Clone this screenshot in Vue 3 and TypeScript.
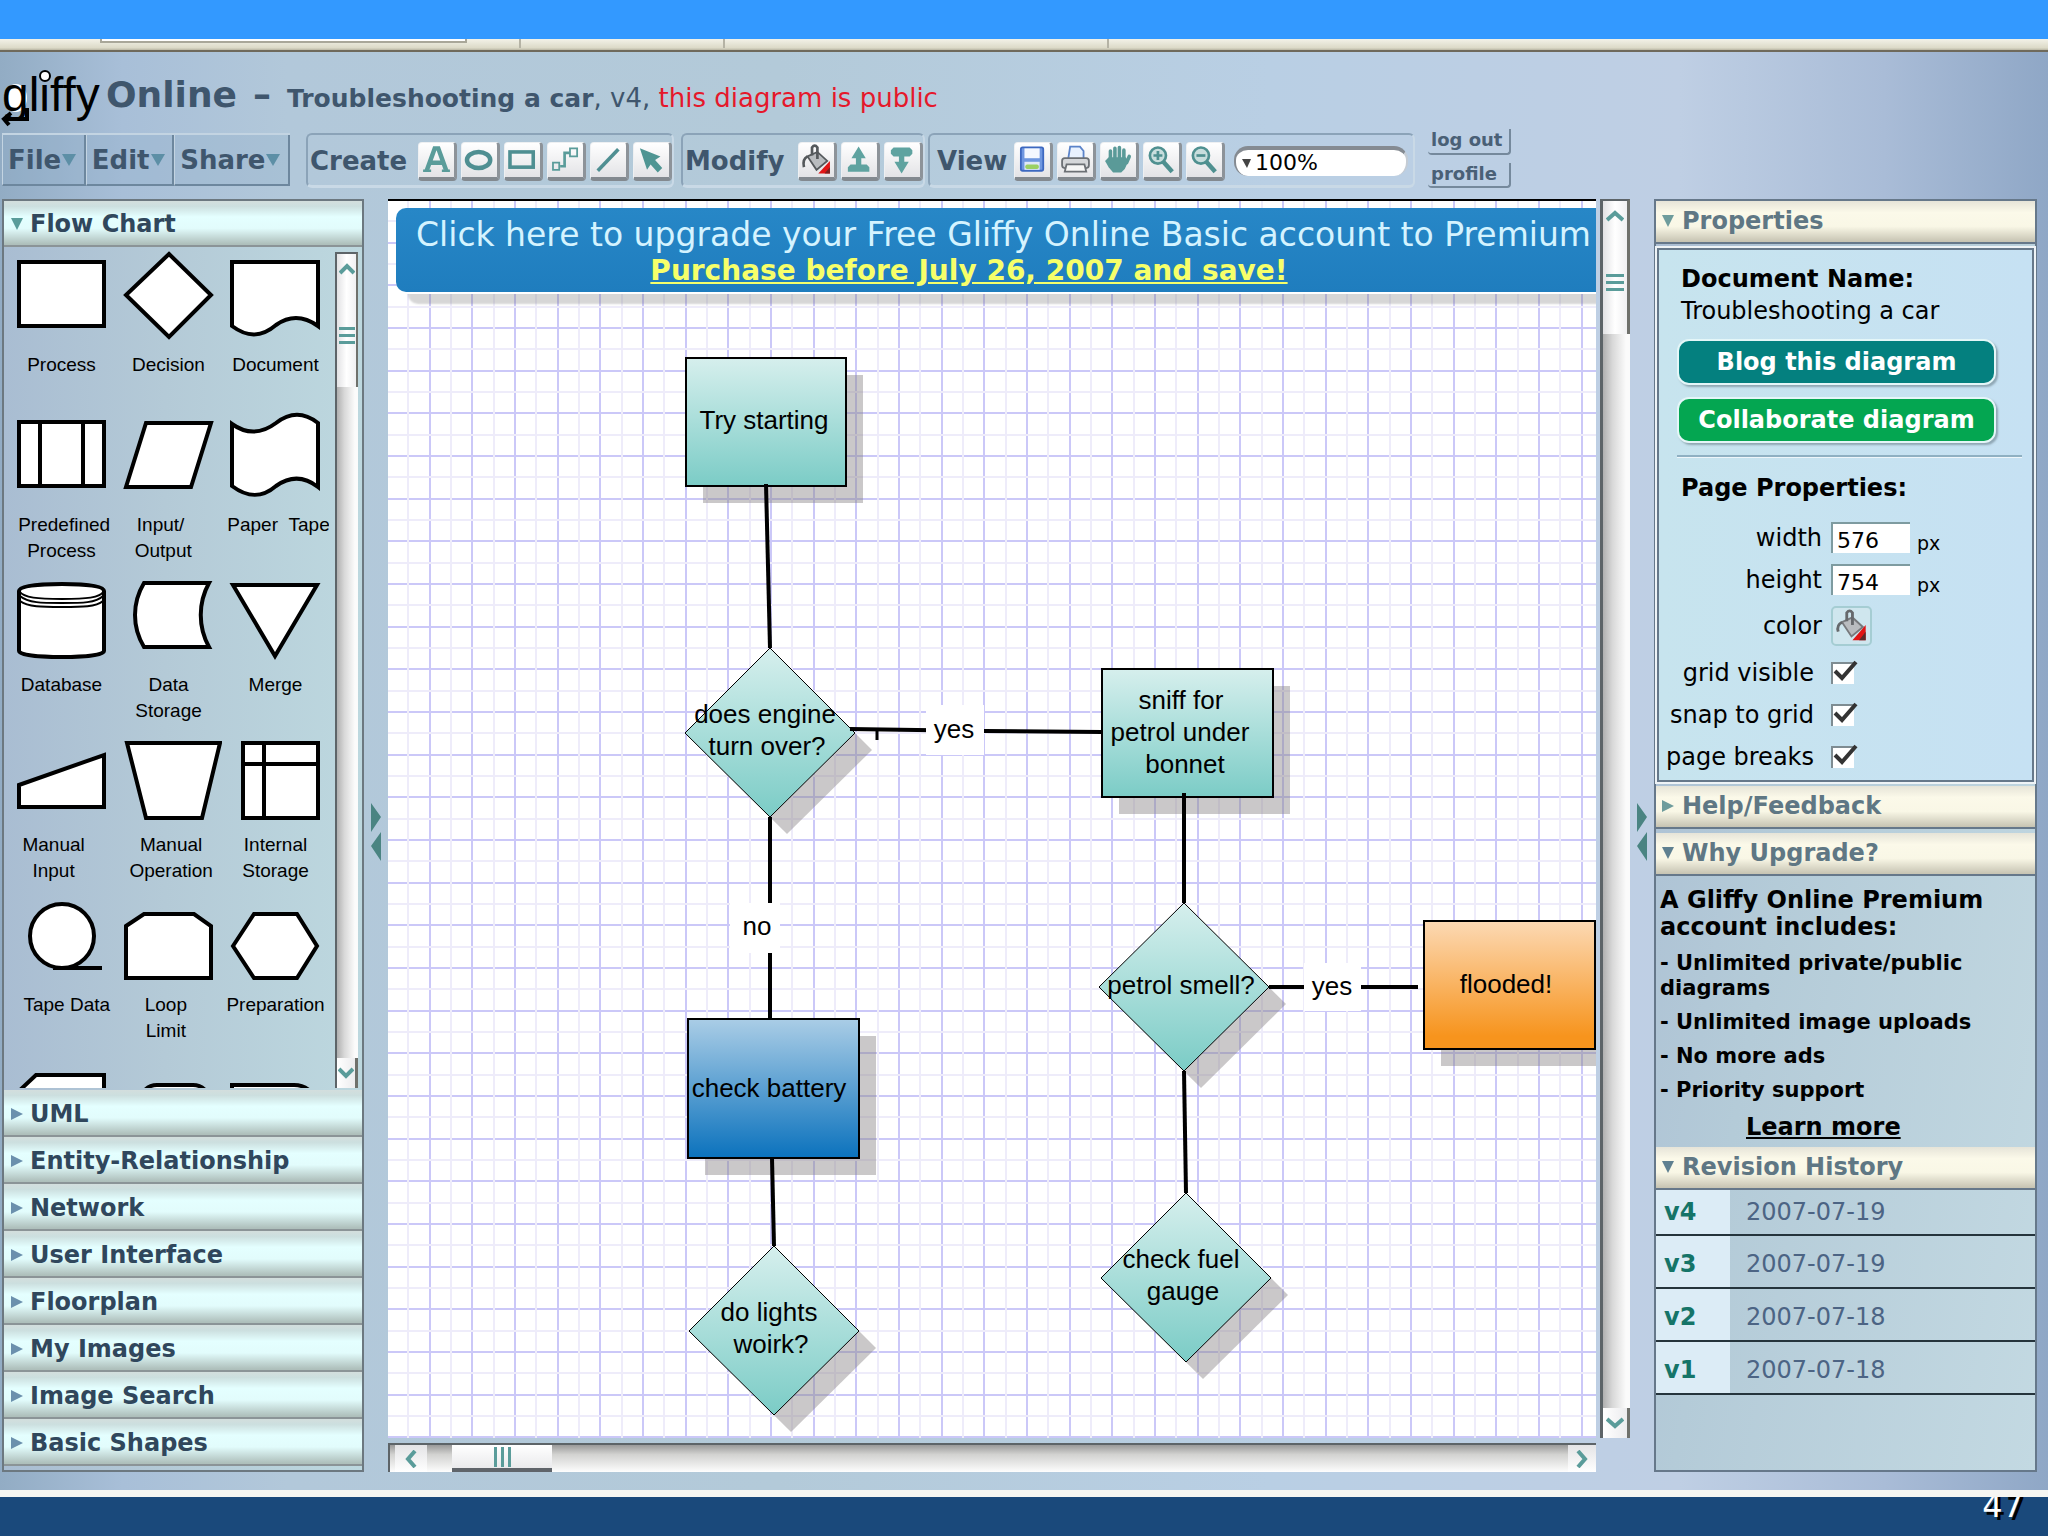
<script setup lang="ts">
import { ref } from 'vue'

interface Stencil {
  label?: string
  d: string
  thin?: string
}

interface DiagramNode {
  kind: 'rect' | 'diamond'
  x: number
  y: number
  w: number
  h: number
  fill: string
  lines: { text: string; x: number; y: number }[]
}

const stencils: Stencil[] = [
  { label: 'Process', d: 'M11 15H96V79H11Z' },
  { label: 'Decision', d: 'M54 7L96 48L54 90L11 48Z' },
  { label: 'Document', d: 'M10 15H96V79C82 69 68 68 54 78C40 90 26 91 10 79Z' },
  { label: '\u00a0Predefined\nProcess', d: 'M11 15H96V79H11ZM32 15V79M75 15V79' },
  { label: 'Input/\u00a0\u00a0\u00a0\nOutput\u00a0\u00a0', d: 'M31 16H96L76 80H11Z' },
  { label: '\u00a0Paper\u00a0\u00a0Tape', d: 'M10 17C24 27 38 28 54 16C68 5 82 5 96 16V80C82 69 68 69 54 79C40 91 26 91 10 79Z' },
  { label: 'Database', d: 'M11 24C11 19 30 17 54 17S96 19 96 24V84C96 88 78 90 54 90S11 88 11 84Z', thin: 'M11 24C16 31 30 32 54 32S92 31 96 24M12 29C20 36 34 36 54 36S88 36 95 29M12 34C20 40 34 40 54 40S88 40 95 34' },
  { label: 'Data\nStorage', d: 'M29 16H94C83 36 83 60 94 80H29C17 60 17 36 29 16Z' },
  { label: 'Merge', d: 'M11 18H95L53 89Z' },
  { label: 'Manual\u00a0\u00a0\u00a0\nInput\u00a0\u00a0\u00a0', d: 'M11 58L96 28V80H11Z' },
  { label: '\u00a0Manual\n\u00a0Operation', d: 'M12 16H105L87 91H31Z' },
  { label: 'Internal\nStorage', d: 'M21 16H96V91H21ZM42 16V91M21 37H96' },
  { label: '\u00a0\u00a0Tape\u00a0Data', d: 'M86 49A32 32 0 1 0 22 49A32 32 0 1 0 86 49M45 81H94' },
  { label: 'Loop\u00a0\nLimit\u00a0', d: 'M11 39L29 27H79L96 39V91H11Z' },
  { label: 'Preparation', d: 'M11 59L32 27H75L95 59L75 91H32Z' },
  { d: 'M11 44L28 28H96V80H11Z' },
  { d: 'M24 60C24 46 32 38 42 38H78C88 38 96 46 96 60Z' },
  { d: 'M10 38H72C84 38 94 46 96 60H10Z' },
]

const libraries = ['UML', 'Entity-Relationship', 'Network', 'User Interface', 'Floorplan', 'My Images', 'Image Search', 'Basic Shapes']

const revisions = [
  { version: 'v4', date: '2007-07-19' },
  { version: 'v3', date: '2007-07-19' },
  { version: 'v2', date: '2007-07-18' },
  { version: 'v1', date: '2007-07-18' },
]

const nodes: DiagramNode[] = [
  { kind: 'rect', x: 298, y: 157, w: 160, h: 128, fill: 'url(#teal)', lines: [{ text: 'Try starting', x: 376, y: 228 }] },
  { kind: 'diamond', x: 297, y: 447, w: 170, h: 169, fill: 'url(#teal)', lines: [{ text: 'does engine', x: 377, y: 522 }, { text: 'turn over?', x: 379, y: 554 }] },
  { kind: 'rect', x: 714, y: 468, w: 171, h: 128, fill: 'url(#teal)', lines: [{ text: 'sniff for', x: 793, y: 508 }, { text: 'petrol under', x: 792, y: 540 }, { text: 'bonnet', x: 797, y: 572 }] },
  { kind: 'diamond', x: 711, y: 702, w: 170, h: 168, fill: 'url(#teal)', lines: [{ text: 'petrol smell?', x: 793, y: 793 }] },
  { kind: 'rect', x: 1036, y: 720, w: 171, h: 128, fill: 'url(#orange)', lines: [{ text: 'flooded!', x: 1118, y: 792 }] },
  { kind: 'rect', x: 300, y: 818, w: 171, h: 139, fill: 'url(#blue)', lines: [{ text: 'check battery', x: 381, y: 896 }] },
  { kind: 'diamond', x: 301, y: 1045, w: 170, h: 169, fill: 'url(#teal)', lines: [{ text: 'do lights', x: 381, y: 1120 }, { text: 'woirk?', x: 383, y: 1152 }] },
  { kind: 'diamond', x: 713, y: 992, w: 170, h: 169, fill: 'url(#teal)', lines: [{ text: 'check fuel', x: 793, y: 1067 }, { text: 'gauge', x: 795, y: 1099 }] },
]

const connectors = [
  'M378 283L382 447', 'M462 528L596 530L714 531', 'M382 616V818',
  'M796 592V702', 'M881 786H1030', 'M796 870L798 992', 'M384 957L386 1045',
]

const edgeLabels = [
  { text: 'yes', x: 538, y: 504, w: 58, h: 50, tx: 566, ty: 537 },
  { text: 'no', x: 342, y: 702, w: 50, h: 50, tx: 369, ty: 734 },
  { text: 'yes', x: 916, y: 762, w: 57, h: 48, tx: 944, ty: 794 },
]

const pitch = 128 / 3
const cells = Array.from({ length: 70 }, (_, i) => i)
const line = (start: number, i: number, half = 0) => Math.round(start + (i + half) * pitch)

function outline(n: DiagramNode): string {
  const cx = n.x + n.w / 2
  const cy = Math.round(n.y + n.h / 2)
  return n.kind === 'rect'
    ? `M${n.x} ${n.y}h${n.w}v${n.h}h${-n.w}Z`
    : `M${cx} ${n.y}L${n.x + n.w} ${cy}L${cx} ${n.y + n.h}L${n.x} ${cy}Z`
}

const pageWidth = ref('576')
const pageHeight = ref('754')
const zoom = ref('100%')
const options = ref([
  { id: 'grid', label: 'grid visible', on: true },
  { id: 'snap', label: 'snap to grid', on: true },
  { id: 'breaks', label: 'page breaks', on: true },
])
</script>

<template>
  <div class="page">
    <div class="slide-top"></div>
    <div class="browser-edge">
      <span class="edge-box"></span>
      <span class="edge-a"></span>
      <span class="edge-b"></span>
      <span class="edge-c"></span>
    </div>

    <div class="app">
      <header>
        <div class="title-row">
          <svg class="logo" width="102" height="62" viewBox="0 0 102 62" role="img" aria-label="gliffy">
            <ellipse cx="16" cy="32" rx="11" ry="14" fill="#fff" />
            <text x="2" y="45" font-size="48">gliffy</text>
            <circle cx="45" cy="10" r="5" fill="#fff" stroke="#000" stroke-width="2" />
            <path d="M27 42V53H5M11 47L4 53L9 59" fill="none" stroke="#000" stroke-width="4" />
          </svg>
          <h1>
            <span>Online</span>
            <span>–</span>
            <span class="doc">Troubleshooting a car<span class="ver">, v4, </span><span class="public">this diagram is public</span></span>
          </h1>
        </div>

        <div class="toolbar">
          <nav class="menus">
            <button v-for="m in ['File', 'Edit', 'Share']" :key="m" type="button">
              {{ m }}<svg width="14" height="12" viewBox="0 0 14 12"><path d="M0 0H14L7 12Z" fill="#5d8fa6" /></svg>
            </button>
          </nav>

          <div class="group create">
            <span class="group-name">Create</span>
            <button class="tool" type="button" aria-label="Text">
              <svg viewBox="0 0 38 38"><path d="M8 31L17 6H21L30 31M12 22H26" fill="none" stroke="#5a9c9a" stroke-width="5" /><path d="M4 31H13M25 31H34" stroke="#5a9c9a" stroke-width="3" /></svg>
            </button>
            <button class="tool" type="button" aria-label="Ellipse">
              <svg viewBox="0 0 38 38"><ellipse cx="18" cy="19" rx="13" ry="9" fill="none" stroke="#4f8f92" stroke-width="5" /></svg>
            </button>
            <button class="tool" type="button" aria-label="Rectangle">
              <svg viewBox="0 0 38 38"><rect x="5" y="10" width="26" height="17" fill="none" stroke="#4f8f92" stroke-width="4" /></svg>
            </button>
            <button class="tool" type="button" aria-label="Connector">
              <svg viewBox="0 0 38 38" fill="none" stroke="#5a9c9a"><path d="M13 26H18V11H24" stroke-width="3" /><path d="M5 22H12V30H5ZM24 6H32V15H24Z" stroke-width="2" /></svg>
            </button>
            <button class="tool" type="button" aria-label="Line">
              <svg viewBox="0 0 38 38"><path d="M7 31L30 7" stroke="#4f8f92" stroke-width="4" /></svg>
            </button>
            <button class="tool" type="button" aria-label="Pointer">
              <svg viewBox="0 0 38 38"><path d="M6 6L29 15L23 19L31 28L26 33L18 24L14 30Z" fill="#4f9593" /></svg>
            </button>
          </div>

          <div class="group modify">
            <span class="group-name">Modify</span>
            <button class="tool" type="button" aria-label="Fill color">
              <svg viewBox="0 0 38 38"><path d="M9 15L20 10L31 20L19 30Z" fill="#b9bcbf" stroke="#55595c" stroke-width="2" /><path d="M14 14V5Q17 1 20 5V18M9 15Q3 18 5 27" fill="none" stroke="#55595c" stroke-width="3" /><path d="M34 20V34H21Z" fill="#e01515" /><path d="M34 27V34H28Z" fill="#7a2020" /></svg>
            </button>
            <button class="tool" type="button" aria-label="Bring to front">
              <svg viewBox="0 0 38 38" fill="#5fa3a0"><path d="M18 4L26 17H21V24H27L30 27V32H6V27L9 24H15V17H10Z" /></svg>
            </button>
            <button class="tool" type="button" aria-label="Send to back">
              <svg viewBox="0 0 38 38" fill="#5fa3a0"><path d="M9 5H27L30 8V12L27 15H21V21H26L18 34L10 21H15V15H9L6 12V8Z" /></svg>
            </button>
          </div>

          <div class="group view">
            <span class="group-name">View</span>
            <button class="tool" type="button" aria-label="Save">
              <svg viewBox="0 0 38 38"><rect x="6" y="5" width="25" height="26" rx="2" fill="#6f97e0" stroke="#3d68c0" stroke-width="2" /><rect x="10" y="6" width="17" height="11" fill="#f4f8ff" /><rect x="10" y="21" width="17" height="9" fill="#dfe9f8" /><rect x="11" y="24" width="15" height="5" rx="2" fill="#9ad064" /></svg>
            </button>
            <button class="tool" type="button" aria-label="Print">
              <svg viewBox="0 0 38 38"><path d="M11 17L13 4H24L28 9V17" fill="#e9f2ff" stroke="#5b83c9" stroke-width="2" /><rect x="4" y="17" width="30" height="11" rx="3" fill="#d5d7da" stroke="#6c7075" stroke-width="2" /><path d="M9 24H29L31 32H7Z" fill="#f6f6f6" stroke="#6c7075" stroke-width="2" /></svg>
            </button>
            <button class="tool" type="button" aria-label="Pan">
              <svg viewBox="0 0 38 38"><path d="M10 20V9M15 19V6M20 19V5M25 20V8M28 22L31 15" stroke="#5a9a98" stroke-width="4" stroke-linecap="round" /><path d="M8 16H27L30 20L26 29L22 33H13L8 27L4 20Z" fill="#5a9a98" /></svg>
            </button>
            <button class="tool" type="button" aria-label="Zoom in">
              <svg viewBox="0 0 38 38" fill="none" stroke="#4f9090"><circle cx="15" cy="14" r="9" stroke-width="3" fill="#c8dedd" /><path d="M10 14H20M15 9V19" stroke-width="3" /><path d="M21 21L31 32" stroke-width="5" /></svg>
            </button>
            <button class="tool" type="button" aria-label="Zoom out">
              <svg viewBox="0 0 38 38" fill="none" stroke="#4f9090"><circle cx="15" cy="14" r="9" stroke-width="3" fill="#c8dedd" /><path d="M10 14H20" stroke-width="3" /><path d="M21 21L31 32" stroke-width="5" /></svg>
            </button>
            <div class="zoom-box">
              <svg width="9" height="9" viewBox="0 0 9 9"><path d="M0 0H9L5 9Z" fill="#444" /></svg>
              <select v-model="zoom" aria-label="Zoom level">
                <option>50%</option>
                <option>100%</option>
                <option>200%</option>
              </select>
            </div>
          </div>

          <div class="account">
            <a href="#logout">log out</a>
            <a href="#profile">profile</a>
          </div>
        </div>
      </header>

      <main>
        <aside class="library">
          <button class="lib-bar open" type="button"><svg width="12" height="12" viewBox="0 0 12 12"><path d="M0 0H12L6 12Z" fill="#5a9c9a" /></svg>Flow Chart</button>
          <div class="shapes">
            <ul>
              <li v-for="s in stencils" :key="s.d">
                <svg width="107" height="105" viewBox="0 0 107 105">
                  <path :d="s.d" fill="#fff" stroke="#000" stroke-width="4" />
                  <path v-if="s.thin" :d="s.thin" fill="none" stroke="#000" stroke-width="2" />
                </svg>
                <span v-if="s.label">{{ s.label }}</span>
              </li>
            </ul>
            <div class="vscroll small">
              <div class="thumb">
                <svg width="16" height="12" viewBox="0 0 16 12"><path d="M1 10L8 3L15 10" fill="none" stroke="#5a9c9a" stroke-width="4" /></svg>
                <i class="grip"></i>
              </div>
              <div class="end"><svg width="16" height="12" viewBox="0 0 16 12"><path d="M1 2L8 9L15 2" fill="none" stroke="#5a9c9a" stroke-width="4" /></svg></div>
            </div>
          </div>
          <button v-for="l in libraries" :key="l" class="lib-bar" type="button"><svg width="12" height="12" viewBox="0 0 12 12"><path d="M0 0V12L12 6Z" fill="#6b90ad" /></svg>{{ l }}</button>
        </aside>

        <div class="splitter"><svg width="12" height="58" viewBox="0 0 12 58"><path d="M1 0L11 14L1 29ZM11 29V58L1 43Z" fill="#4a8482" /></svg></div>

        <section class="stage">
          <div class="canvas">
            <svg class="diagram" width="100%" height="100%">
              <defs>
                <linearGradient id="teal" x1="0" y1="0" x2="0" y2="1"><stop offset="0" stop-color="#d6efed" /><stop offset="1" stop-color="#7bccc6" /></linearGradient>
                <linearGradient id="orange" x1="0" y1="0" x2="0" y2="1"><stop offset="0" stop-color="#fcd9b4" /><stop offset="0.9" stop-color="#f7941d" /></linearGradient>
                <linearGradient id="blue" x1="0" y1="0" x2="0" y2="1"><stop offset="0" stop-color="#aacde6" /><stop offset="1" stop-color="#0b72bd" /></linearGradient>
              </defs>
              <g stroke="#cbc8f8" stroke-width="2">
                <line v-for="i in cells" :key="'a' + i" :x1="line(-1, i)" :x2="line(-1, i)" y1="0" y2="100%" />
                <line v-for="i in cells" :key="'b' + i" x1="0" x2="100%" :y1="line(-1, i)" :y2="line(-1, i)" />
              </g>
              <g stroke="#eeecfa" stroke-width="2">
                <line v-for="i in cells" :key="'c' + i" :x1="line(-1, i, 0.5)" :x2="line(-1, i, 0.5)" y1="0" y2="100%" />
                <line v-for="i in cells" :key="'d' + i" x1="0" x2="100%" :y1="line(-1, i, 0.5)" :y2="line(-1, i, 0.5)" />
              </g>
              <g transform="translate(17 17)" fill="#8a8688" fill-opacity="0.45">
                <path v-for="(n, i) in nodes" :key="i" :d="outline(n)" />
              </g>
              <g v-for="(n, i) in nodes" :key="'n' + i">
                <path :d="outline(n)" :fill="n.fill" stroke="#000" :stroke-width="n.kind === 'rect' ? 2 : 1" />
              </g>
              <path v-for="c in connectors" :key="c" :d="c" fill="none" stroke="#000" stroke-width="4" />
              <path d="M489 530V539" stroke="#000" stroke-width="3" />
              <g v-for="e in edgeLabels" :key="e.x">
                <rect :x="e.x" :y="e.y" :width="e.w" :height="e.h" fill="#fff" />
                <text :x="e.tx" :y="e.ty">{{ e.text }}</text>
              </g>
              <template v-for="n in nodes">
                <text v-for="t in n.lines" :key="t.text" :x="t.x" :y="t.y">{{ t.text }}</text>
              </template>
            </svg>
            <a class="banner" href="#upgrade">
              <span class="offer">Click here to upgrade your Free Gliffy Online Basic account to Premium</span>
              <span class="deadline">Purchase before July 26, 2007 and save!</span>
            </a>
          </div>
          <div class="vscroll">
            <div class="thumb">
              <svg width="18" height="12" viewBox="0 0 18 12"><path d="M1 10L9 3L17 10" fill="none" stroke="#5a9c9a" stroke-width="4" /></svg>
              <i class="grip"></i>
            </div>
            <div class="end"><svg width="18" height="12" viewBox="0 0 18 12"><path d="M1 2L9 9L17 2" fill="none" stroke="#5a9c9a" stroke-width="4" /></svg></div>
          </div>
          <div class="hscroll">
            <div class="arrow"><svg width="12" height="18" viewBox="0 0 12 18"><path d="M10 1L3 9L10 17" fill="none" stroke="#5a9c9a" stroke-width="4" /></svg></div>
            <div class="hthumb"><i></i></div>
            <div class="arrow right"><svg width="12" height="18" viewBox="0 0 12 18"><path d="M2 1L9 9L2 17" fill="none" stroke="#5a9c9a" stroke-width="4" /></svg></div>
          </div>
        </section>

        <div class="splitter"><svg width="12" height="58" viewBox="0 0 12 58"><path d="M1 0L11 14L1 29ZM11 29V58L1 43Z" fill="#4a8482" /></svg></div>

        <aside class="inspector">
          <button class="bar" type="button"><svg width="12" height="12" viewBox="0 0 12 12"><path d="M0 0H12L6 12Z" fill="#6e9c9c" /></svg>Properties</button>
          <div class="props">
            <h2>Document Name:</h2>
            <p>Troubleshooting a car</p>
            <button class="pill blog" type="button">Blog this diagram</button>
            <button class="pill collab" type="button">Collaborate diagram</button>
            <hr />
            <h2>Page Properties:</h2>
            <div class="fields">
              <div class="row"><label for="pw">width</label><input id="pw" v-model="pageWidth" type="text" /><small>px</small></div>
              <div class="row"><label for="ph">height</label><input id="ph" v-model="pageHeight" type="text" /><small>px</small></div>
              <div class="row">
                <label for="pc">color</label>
                <button id="pc" class="swatch" type="button">
                  <svg viewBox="0 0 38 38"><path d="M9 15L20 10L31 20L19 30Z" fill="#b9bcbf" stroke="#77797c" stroke-width="2" /><path d="M14 14V5Q17 1 20 5V18M9 15Q3 18 5 25" fill="none" stroke="#66696c" stroke-width="3" /><path d="M34 18V34H20Z" fill="#e01515" /><path d="M34 25V34H27Z" fill="#5a2a2a" /></svg>
                </button>
              </div>
              <div v-for="o in options" :key="o.id" class="row option">
                <label :for="o.id">{{ o.label }}</label>
                <span class="tick">
                  <input :id="o.id" v-model="o.on" type="checkbox" />
                  <svg v-if="o.on" width="28" height="26" viewBox="0 0 28 26"><path d="M4 12L11 19L25 3" fill="none" stroke="#333" stroke-width="4" /></svg>
                </span>
              </div>
            </div>
          </div>
          <button class="bar" type="button"><svg width="12" height="12" viewBox="0 0 12 12"><path d="M0 0V12L12 6Z" fill="#6e9c9c" /></svg>Help/Feedback</button>
          <button class="bar why-bar" type="button"><svg width="12" height="12" viewBox="0 0 12 12"><path d="M0 0H12L6 12Z" fill="#5f8090" /></svg>Why Upgrade?</button>
          <div class="why">
            <h2>A Gliffy Online Premium account includes:</h2>
            <ul>
              <li>- Unlimited private/public diagrams</li>
              <li>- Unlimited image uploads</li>
              <li>- No more ads</li>
              <li>- Priority support</li>
            </ul>
            <a href="#learn">Learn more</a>
          </div>
          <button class="bar" type="button"><svg width="12" height="12" viewBox="0 0 12 12"><path d="M0 0H12L6 12Z" fill="#5f8090" /></svg>Revision History</button>
          <table>
            <tbody>
              <tr v-for="r in revisions" :key="r.version">
                <th scope="row">{{ r.version }}</th>
                <td>{{ r.date }}</td>
              </tr>
            </tbody>
          </table>
        </aside>
      </main>
    </div>

    <footer><span>47</span></footer>
  </div>
</template>

<style>
body {
  margin: 0;
}
</style>

<style scoped>
.page {
  display: flex;
  flex-direction: column;
  height: 100vh;
  min-height: 1300px;
  overflow: hidden;
  font-family: 'DejaVu Sans', Verdana, sans-serif;
  font-size: 24px;
  color: #000;
}

.page *,
.page *::before {
  box-sizing: border-box;
}

button,
select,
input {
  font: inherit;
  color: inherit;
  margin: 0;
  padding: 0;
  border: 0;
  border-radius: 0;
}

button {
  cursor: pointer;
}

h1,
h2,
p,
ul {
  margin: 0;
  padding: 0;
  list-style: none;
}

.slide-top {
  flex: none;
  height: 39px;
  background: #3399ff;
}

.browser-edge {
  flex: none;
  display: flex;
  align-items: flex-start;
  height: 13px;
  padding-left: 100px;
  background: linear-gradient(#f3f2e8, #dcdac8 80%, #b9b6a4);
  border-bottom: 2px solid #6f6a5c;
}

.edge-box {
  width: 367px;
  height: 4px;
  background: #fff;
  border: 2px solid #a9a799;
  border-top: 0;
}

.edge-a,
.edge-b,
.edge-c {
  height: 9px;
  border-right: 2px solid #b5b3a5;
}

.edge-a {
  width: 54px;
}

.edge-b {
  width: 204px;
}

.edge-c {
  width: 384px;
}

.app {
  flex: 1;
  min-height: 0;
  display: flex;
  flex-direction: column;
  padding-bottom: 18px;
  background: linear-gradient(90deg, #92acc4 0, #a8bfd8 6%, #b2c8da 14%, #b3cad9 38%, #b9cfe4 62%, #bfcfe4 82%, #a9bcd7 92%, #8fa7c6 100%);
}

header {
  flex: none;
  padding-bottom: 11px;
}

.title-row {
  display: flex;
  align-items: center;
  gap: 4px;
  height: 81px;
  padding-top: 8px;
}

.logo {
  flex: none;
  font-family: 'Liberation Sans', Arial, sans-serif;
}

h1 {
  display: flex;
  align-items: baseline;
  gap: 16px;
  font-size: 36px;
  line-height: 44px;
  color: #3f566d;
}

h1 .doc {
  font-size: 25px;
  white-space: pre;
}

h1 .ver,
h1 .public {
  font-size: 26px;
  font-weight: 400;
}

h1 .public {
  color: #e5182b;
}

.toolbar {
  display: flex;
  height: 55px;
  padding-left: 2px;
}

.menus {
  display: flex;
  width: 288px;
  height: 53px;
  margin-right: 16px;
  border-top: 2px solid #c3d4e2;
}

.menus button {
  flex: auto;
  display: flex;
  align-items: center;
  gap: 1px;
  padding: 0 5px;
  font-size: 26px;
  font-weight: 700;
  color: #3f566d;
  background: rgba(140, 170, 200, 0.25);
  border-right: 2px solid #6d879e;
  border-bottom: 2px solid #6d879e;
  border-left: 1px solid #c3d4e2;
}

.group {
  display: flex;
  align-items: center;
  gap: 4px;
  padding: 2px 0 0 2px;
  border-top: 2px solid #8ba3b8;
  border-left: 2px solid #8ba3b8;
  border-right: 2px solid #c9d9e6;
  border-bottom: 3px solid #c9d9e6;
  border-radius: 6px;
}

.create {
  width: 368px;
  margin-right: 7px;
}

.modify {
  width: 244px;
  margin-right: 3px;
}

.view {
  width: 487px;
  padding-left: 7px;
  margin-right: 13px;
}

.group-name {
  flex: 1;
  font-size: 26px;
  font-weight: 700;
  color: #3f566d;
}

.tool {
  flex: none;
  width: 39px;
  height: 39px;
  background: linear-gradient(#fff, #e3e3e6);
  border: 1px solid #eef0f2;
  border-right: 3px solid #8d9399;
  border-bottom: 4px solid #83898f;
  border-radius: 4px;
}

.tool svg {
  display: block;
  width: 100%;
  height: 100%;
}

.zoom-box {
  flex: none;
  display: flex;
  align-items: center;
  gap: 4px;
  width: 174px;
  height: 30px;
  padding-left: 6px;
  margin: 0 5px;
  background: #fff;
  border-top: 4px solid #858b92;
  border-left: 2px solid #858b92;
  border-right: 2px solid #c5ccd4;
  border-radius: 14px;
}

.zoom-box select {
  appearance: none;
  flex: 1;
  font-size: 22px;
  line-height: 26px;
  background: transparent;
}

.account {
  display: flex;
  flex-direction: column;
  gap: 8px;
  margin-top: -4px;
}

.account a {
  display: block;
  width: 83px;
  height: 26px;
  padding-left: 3px;
  font-size: 18px;
  font-weight: 700;
  line-height: 22px;
  color: #4a6076;
  text-decoration: none;
  border-right: 2px solid #75899c;
  border-bottom: 2px solid #75899c;
  border-radius: 0 0 4px 4px;
}

main {
  flex: 1;
  min-height: 0;
  display: flex;
  padding: 0 11px 0 2px;
}

.library {
  flex: none;
  display: flex;
  flex-direction: column;
  width: 362px;
  padding-bottom: 4px;
  border: 2px solid #6c7880;
  background: linear-gradient(90deg, #a9bdd2, #b4cad7 45%, #bdd8df);
}

.lib-bar {
  flex: none;
  display: flex;
  align-items: center;
  gap: 7px;
  height: 47px;
  padding: 3px 8px 0 7px;
  font-weight: 700;
  color: #30475c;
  background: linear-gradient(#d3dedd, #ccdfdf 12%, #e4ffff 36%, #e2fcfc 62%, #aebfbb 98%);
  border-bottom: 2px solid #8b9497;
}

.lib-bar.open {
  height: 46px;
  padding-top: 1px;
}

.shapes {
  flex: 1;
  min-height: 0;
  display: flex;
  overflow: hidden;
  padding: 0 4px 2px;
}

.shapes ul {
  flex: none;
  display: grid;
  grid-template-columns: repeat(3, 107px);
  grid-auto-rows: 160px;
  height: 100%;
  overflow: hidden;
  margin-right: 6px;
}

.shapes li svg {
  display: block;
}

.shapes li span {
  display: block;
  font-family: 'Liberation Sans', Arial, sans-serif;
  font-size: 19px;
  line-height: 26px;
  text-align: center;
  white-space: pre;
}

.vscroll {
  display: flex;
  flex-direction: column;
  justify-content: space-between;
  width: 30px;
  background: linear-gradient(90deg, #b0b0b0, #d8d8d8 35%, #fbfbfb 85%);
  border-left: 3px solid #5d6468;
}

.vscroll.small {
  width: 23px;
  margin-top: 5px;
  border-left-width: 2px;
}

.thumb {
  display: flex;
  flex-direction: column;
  align-items: center;
  gap: 52px;
  height: 135px;
  padding-top: 9px;
  background: linear-gradient(90deg, #e2e2e4, #fff 50%, #f0f0f2);
  border-top: 2px solid #5d6468;
  border-right: 3px solid #6f716c;
}

.small .thumb {
  border-right-width: 2px;
}

.grip {
  width: 18px;
  height: 18px;
  background: repeating-linear-gradient(#5a9c9a 0 3px, transparent 3px 7px);
}

.small .grip {
  width: 16px;
}

.end {
  display: flex;
  align-items: center;
  justify-content: center;
  height: 30px;
  background: linear-gradient(90deg, #fff, #ececee);
  border-right: 3px solid #6f716c;
}

.splitter {
  flex: none;
  display: flex;
  align-items: center;
  justify-content: center;
  width: 24px;
  padding-right: 1px;
  padding-bottom: 8px;
}

.stage {
  flex: 1;
  min-width: 0;
  display: grid;
  grid-template-columns: minmax(0, 1fr) 30px;
  grid-template-rows: minmax(0, 1fr) 29px;
  column-gap: 4px;
  row-gap: 5px;
}

.canvas {
  position: relative;
  overflow: hidden;
  background: #fff;
  border-top: 2px solid #000;
}

.diagram {
  display: block;
}

.diagram text {
  font-family: 'Liberation Sans', Arial, sans-serif;
  font-size: 26px;
  text-anchor: middle;
}

.banner {
  position: absolute;
  top: 7px;
  left: 8px;
  right: 0;
  display: flex;
  flex-direction: column;
  height: 84px;
  padding-left: 20px;
  color: #d4f3ff;
  text-decoration: none;
  white-space: nowrap;
  background: linear-gradient(#2787c7, #1f7dbe);
  border-radius: 10px 0 0 10px;
  box-shadow: 0 2px 0 #fff, 12px 12px 2px rgba(120, 120, 120, 0.3);
}

.offer {
  font-size: 33px;
  line-height: 40px;
  padding-top: 7px;
}

.deadline {
  align-self: center;
  padding-right: 74px;
  font-size: 28px;
  font-weight: 700;
  line-height: 32px;
  color: #f6ff6a;
  text-decoration: underline;
}

.hscroll {
  display: flex;
  background: linear-gradient(#9a9a9a, #d2d2d0 35%, #fdfdfd);
  border-top: 2px solid #5d6468;
  border-left: 2px solid #5d6468;
}

.arrow {
  display: flex;
  align-items: center;
  justify-content: center;
  width: 32px;
  margin-left: 5px;
  background: linear-gradient(#e4e4e6, #fff);
}

.arrow.right {
  width: 28px;
  margin-left: auto;
}

.hthumb {
  display: flex;
  align-items: center;
  justify-content: center;
  width: 100px;
  margin-left: 25px;
  background: linear-gradient(#fff, #eaeaec);
  border-bottom: 4px solid #5f646a;
}

.hthumb i {
  width: 17px;
  height: 20px;
  background: repeating-linear-gradient(90deg, #5a9c9a 0 3px, transparent 3px 7px);
}

.inspector {
  flex: none;
  width: 383px;
  border: 2px solid #66788a;
  background: linear-gradient(100deg, #aabdd3, #b4cbd8 40%, #c3d9e2);
}

.bar {
  display: flex;
  align-items: center;
  gap: 8px;
  width: 100%;
  height: 43px;
  padding: 0 6px 1px;
  font-weight: 700;
  color: #5f7784;
  background: linear-gradient(#e6e4d8, #fbf9e9 28%, #f9f7e6 62%, #c6c3b2);
  border-bottom: 2px solid #66788a;
}

.props {
  margin: 4px 1px 4px;
  padding: 13px 10px 8px 0;
  background: linear-gradient(90deg, #c7e4ee, #c6e1f3);
  border: 2px solid #66788a;
  outline: 2px solid #eef3f6;
}

h2 {
  font-size: 24px;
  line-height: 32px;
}

.props h2,
.props p {
  padding-left: 22px;
}

.props p {
  line-height: 32px;
}

.pill {
  display: block;
  width: 319px;
  height: 46px;
  margin: 12px 0 0 18px;
  font-weight: 700;
  color: #fff;
  border: 2px solid #e4f6f8;
  border-radius: 12px;
  box-shadow: 2px 2px 2px rgba(90, 110, 120, 0.5);
}

.blog {
  background: #04807f;
}

.collab {
  background: #04a651;
}

hr {
  height: 3px;
  margin: 12px 0 14px 18px;
  background: #8fb0c2;
  border: 0;
  border-bottom: 1px solid #eef6fa;
}

.fields {
  display: flex;
  flex-direction: column;
  gap: 11px;
  margin-top: 18px;
}

.row {
  display: flex;
  align-items: center;
  height: 31px;
}

.row:nth-child(3) {
  height: 40px;
}

.row label {
  width: 163px;
  margin-right: 9px;
  text-align: right;
}

.row.option label {
  width: 155px;
  margin-right: 17px;
}

.row input[type='text'] {
  width: 79px;
  height: 31px;
  padding: 4px 4px 0;
  font-size: 22px;
  background: #fff;
  border-top: 2px solid #7e9ba0;
  border-left: 2px solid #7e9ba0;
}

.row small {
  align-self: flex-end;
  margin-left: 7px;
  font-size: 19px;
  line-height: 20px;
}

.swatch {
  width: 41px;
  height: 40px;
  background: #cfe6ee;
  border: 2px solid #a5cdd3;
  border-radius: 5px;
}

.swatch svg {
  display: block;
  width: 100%;
  height: 100%;
}

.tick {
  position: relative;
  display: flex;
}

.tick input {
  appearance: none;
  width: 23px;
  height: 22px;
  background: #fff;
  border-top: 2px solid #7e8c92;
  border-left: 2px solid #7e8c92;
}

.tick svg {
  position: absolute;
  left: 0;
  top: -3px;
  pointer-events: none;
}

.why-bar {
  margin-top: 4px;
}

.why {
  padding: 11px 30px 4px 4px;
}

.why h2 {
  line-height: 27px;
}

.why ul {
  display: flex;
  flex-direction: column;
  gap: 9px;
  margin: 10px 0 8px;
}

.why li {
  font-size: 21px;
  font-weight: 700;
  line-height: 25px;
}

.why a {
  display: block;
  width: fit-content;
  margin-left: 86px;
  font-weight: 700;
  line-height: 32px;
  color: #000;
}

table {
  width: 100%;
  border-collapse: collapse;
}

th,
td {
  height: 53px;
  padding: 5px 0 0;
  text-align: left;
  border-bottom: 2px solid #25343c;
}

tr:first-child th,
tr:first-child td {
  height: 45px;
  padding-top: 0;
}

th {
  width: 74px;
}

table th {
  padding-left: 8px;
  color: #157468;
  background: #dcecf6;
}

table td {
  padding-left: 16px;
  color: #4c6484;
}

footer {
  flex: none;
  display: flex;
  justify-content: flex-end;
  height: 46px;
  padding-right: 25px;
  overflow: hidden;
  background: #1a497b;
  border-top: 7px solid #f6f6f2;
}

footer span {
  margin-top: -10px;
  font-size: 32px;
  line-height: 38px;
  color: #fff;
  text-shadow: 3px 3px 0 #000;
}
</style>
